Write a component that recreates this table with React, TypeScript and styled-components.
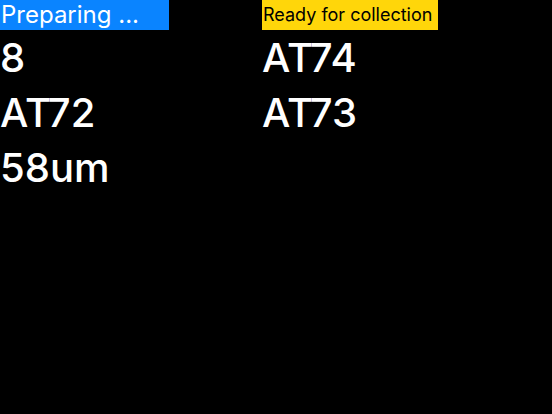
import React from "react";
import styled, { createGlobalStyle } from "styled-components";

const Global = createGlobalStyle`
  html, body { margin: 0; padding: 0; background: #000; }
  body { font-family: Inter, "Noto Sans", sans-serif; color: #fff; }
`;

const Board = styled.div`
  display: grid;
  grid-template-columns: 262px 1fr;
  min-height: 414px;
  background: #000;
`;

const Column = styled.section`
  display: flex;
  flex-direction: column;
  align-items: flex-start;
`;

const Header = styled.div<{ $bg: string; $fg: string; $size: number; $width: number }>`
  box-sizing: border-box;
  width: ${(p) => p.$width}px;
  height: 30px;
  line-height: 30px;
  padding-left: 1px;
  background: ${(p) => p.$bg};
  color: ${(p) => p.$fg};
  font-size: ${(p) => p.$size}px;
  white-space: nowrap;
`;

const Item = styled.div`
  font-size: 40px;
  line-height: 55px;
  font-weight: 500;
  color: #fff;
`;

export default function App() {
  return (
    <>
      <Global />
      <Board>
        <Column>
          <Header $bg="#0a84ff" $fg="#fff" $size={24} $width={169}>
            Preparing ...
          </Header>
          <Item>8</Item>
          <Item>AT72</Item>
          <Item>58um</Item>
        </Column>
        <Column>
          <Header $bg="#ffd60a" $fg="#000" $size={18} $width={176}>
            Ready for collection
          </Header>
          <Item>AT74</Item>
          <Item>AT73</Item>
        </Column>
      </Board>
    </>
  );
}
